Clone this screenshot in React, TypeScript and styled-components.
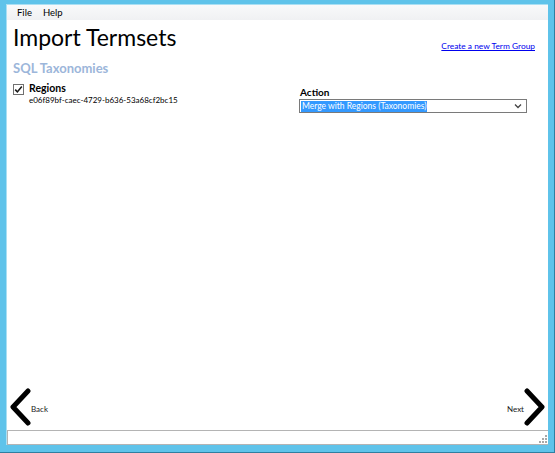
import React from 'react';
import styled, {createGlobalStyle} from 'styled-components';

const GlobalStyle = createGlobalStyle`
  html, body {
    margin: 0;
    padding: 0;
    overflow: hidden;
    background: #ffffff;
  }
  * {
    box-sizing: border-box;
  }
`;

const FONT = `Lato, "Noto Sans", Arial, sans-serif`;

export default function App() {
  return (
    <>
      <GlobalStyle />
      <StyledFrame>
        <StyledWindow>
          <StyledMenuBar>
            <StyledMenuItem>File</StyledMenuItem>
            <StyledMenuItem>Help</StyledMenuItem>
          </StyledMenuBar>

          <StyledContent>
            <StyledHeader>
              <StyledTitle>Import Termsets</StyledTitle>
              <StyledLink href="#">Create a new Term Group</StyledLink>
            </StyledHeader>

            <StyledSectionTitle>SQL Taxonomies</StyledSectionTitle>

            <StyledRow>
              <StyledTermset>
                <StyledCheckbox>
                  <svg width="9" height="9" viewBox="0 0 9 9">
                    <path
                      d="M1.2 4.6 L3.4 6.9 L7.8 1.6"
                      fill="none"
                      stroke="#1a1a1a"
                      strokeWidth="1.6"
                    />
                  </svg>
                </StyledCheckbox>
                <div>
                  <StyledTermName>Regions</StyledTermName>
                  <StyledGuid>e06f89bf-caec-4729-b636-53a68cf2bc15</StyledGuid>
                </div>
              </StyledTermset>

              <StyledAction>
                <StyledLabel>Action</StyledLabel>
                <StyledSelect>
                  <StyledSelected>Merge with Regions (Taxonomies)</StyledSelected>
                  <svg width="8" height="6" viewBox="0 0 8 6">
                    <path
                      d="M1 1.5 L4 4.5 L7 1.5"
                      fill="none"
                      stroke="#444"
                      strokeWidth="1.3"
                    />
                  </svg>
                </StyledSelect>
              </StyledAction>
            </StyledRow>

            <StyledSpacer />

            <StyledNav>
              <StyledNavButton>
                <svg width="22" height="38" viewBox="0 0 22 38">
                  <path
                    d="M19 3 L4 19 L19 35"
                    fill="none"
                    stroke="#000"
                    strokeWidth="5"
                    strokeLinecap="round"
                    strokeLinejoin="round"
                  />
                </svg>
                <StyledNavLabel>Back</StyledNavLabel>
              </StyledNavButton>
              <StyledNavButton>
                <StyledNavLabel>Next</StyledNavLabel>
                <svg width="22" height="38" viewBox="0 0 22 38">
                  <path
                    d="M3 3 L18 19 L3 35"
                    fill="none"
                    stroke="#000"
                    strokeWidth="5"
                    strokeLinecap="round"
                    strokeLinejoin="round"
                  />
                </svg>
              </StyledNavButton>
            </StyledNav>
          </StyledContent>

          <StyledStatusBar>
            <StyledGrip>
              <svg width="9" height="9" viewBox="0 0 9 9">
                <g fill="#a8a8a8">
                  <rect x="7" y="1" width="2" height="2" />
                  <rect x="4" y="4" width="2" height="2" />
                  <rect x="7" y="4" width="2" height="2" />
                  <rect x="1" y="7" width="2" height="2" />
                  <rect x="4" y="7" width="2" height="2" />
                  <rect x="7" y="7" width="2" height="2" />
                </g>
              </svg>
            </StyledGrip>
          </StyledStatusBar>
        </StyledWindow>
      </StyledFrame>
    </>
  );
}

const StyledFrame = styled.div`
  width: 555px;
  height: 453px;
  background: #5fc3ea;
  padding: 4px 6px 7px 6px;
  border-right: 1px solid #2f7fa0;
  border-bottom: 1px solid #2f7fa0;
`;

const StyledWindow = styled.div`
  width: 100%;
  height: 100%;
  display: flex;
  flex-direction: column;
  background: #ffffff;
  border-left: 1px solid #a9dff3;
  border-top: 1px solid #a9dff3;
  font-family: ${FONT};
  color: #000;
`;

const StyledMenuBar = styled.div`
  height: 15px;
  display: flex;
  align-items: center;
  gap: 11px;
  padding-left: 10px;
  background: linear-gradient(#f8f9fa, #f0f1f3);
`;

const StyledMenuItem = styled.span`
  font-size: 9.5px;
  line-height: 12px;
  color: #000;
`;

const StyledContent = styled.div`
  flex: 1;
  display: flex;
  flex-direction: column;
  padding: 0 12px 0 4px;
`;

const StyledHeader = styled.div`
  display: flex;
  justify-content: space-between;
  align-items: flex-end;
  padding-left: 2px;
`;

const StyledTitle = styled.h1`
  margin: 2px 0 0;
  font-family: ${FONT};
  font-weight: 400;
  font-size: 23px;
  line-height: 30px;
`;

const StyledLink = styled.a`
  font-size: 8.4px;
  line-height: 12px;
  color: #0000ee;
  text-decoration: underline;
  margin-right: 1px;
`;

const StyledSectionTitle = styled.h2`
  margin: 8px 0 0 2px;
  font-size: 13px;
  line-height: 16px;
  font-weight: 700;
  color: #9cb6da;
`;

const StyledRow = styled.div`
  display: grid;
  grid-template-columns: 288px 1fr;
  margin-top: 6px;
  padding-right: 9px;
`;

const StyledTermset = styled.div`
  display: flex;
  align-items: flex-start;
  gap: 5px;
  padding-left: 2px;
`;

const StyledCheckbox = styled.span`
  width: 11px;
  height: 11px;
  margin-top: 2px;
  border: 1px solid #707070;
  background: #fff;
  display: flex;
  align-items: center;
  justify-content: center;
`;

const StyledTermName = styled.div`
  font-size: 10.5px;
  line-height: 13px;
  font-weight: 700;
`;

const StyledGuid = styled.div`
  font-size: 8px;
  line-height: 10px;
`;

const StyledAction = styled.div`
  display: flex;
  flex-direction: column;
  padding-top: 4px;
`;

const StyledLabel = styled.div`
  font-size: 10px;
  line-height: 12px;
  font-weight: 700;
  padding-left: 1px;
`;

const StyledSelect = styled.div`
  height: 14px;
  margin-top: 1px;
  border: 1px solid #7a7a7a;
  display: flex;
  align-items: center;
  justify-content: space-between;
  padding: 0 4px 0 1px;
  background: #fff;
`;

const StyledSelected = styled.span`
  font-size: 8.5px;
  line-height: 11px;
  background: #3399ff;
  color: #fff;
  padding: 0 1px;
`;

const StyledSpacer = styled.div`
  flex: 1;
`;

const StyledNav = styled.div`
  display: flex;
  justify-content: space-between;
  align-items: center;
  padding: 0 0 4px 0;
  margin-right: -10px;
  margin-left: -2px;
`;

const StyledNavButton = styled.div`
  display: flex;
  align-items: center;
`;

const StyledNavLabel = styled.span`
  font-size: 8px;
  line-height: 10px;
  color: #1a1a1a;
  margin-top: 4px;
`;

const StyledStatusBar = styled.div`
  height: 15px;
  border-top: 1px solid #b4b4b4;
  border-left: 1px solid #b4b4b4;
  border-bottom: 1px solid #b4b4b4;
  background: #fff;
  display: flex;
  justify-content: flex-end;
  align-items: flex-end;
  padding: 0 1px 1px 0;
`;

const StyledGrip = styled.span`
  display: flex;
`;
